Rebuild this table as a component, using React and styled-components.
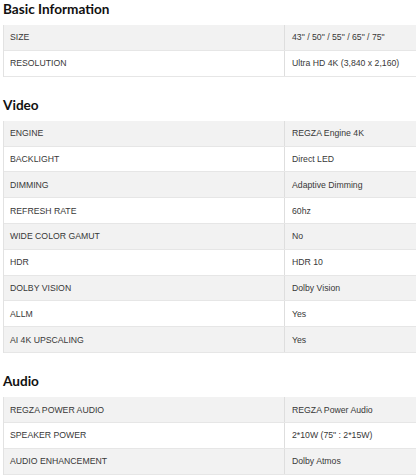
import React from "react";
import styled, { createGlobalStyle } from "styled-components";

const GlobalStyle = createGlobalStyle`
    html, body {
        margin: 0;
        padding: 0;
        background: #fff;
        overflow: hidden;
    }
`;

const Page = styled.div`
    width: 430px;
    padding: 0 0 0 3px;
    font-family: "Liberation Sans", Arial, sans-serif;
`;

const Section = styled.section`
    margin-bottom: ${(p) => (p.last ? "0" : "19.2px")};
`;

const Heading = styled.h2`
    margin: 0;
    height: 25px;
    padding-top: 1px;
    box-sizing: border-box;
    font-family: "Lato", "Liberation Sans", sans-serif;
    font-weight: 700;
    font-size: 13.6px;
    line-height: 16px;
    color: #111;
`;

const Table = styled.div`
    width: 427px;
    border-left: 1px solid #e2e2e2;
`;

const Row = styled.div`
    display: grid;
    grid-template-columns: 280px 1fr;
    height: 25.8px;
    box-sizing: border-box;
    border-bottom: 1px solid #e6e6e6;
    background: ${(p) => (p.shade ? "#f2f2f2" : "#ffffff")};
`;

const Cell = styled.div`
    display: flex;
    align-items: center;
    padding-left: ${(p) => (p.value ? "7px" : "6px")};
    font-size: 8.7px;
    color: #383838;
    white-space: nowrap;
    border-left: ${(p) => (p.value ? "1px solid #dedede" : "none")};
`;

const sections = [
    {
        title: "Basic Information",
        rows: [
            ["SIZE", "43\" / 50\" / 55\" / 65\" / 75\""],
            ["RESOLUTION", "Ultra HD 4K (3,840 x 2,160)"],
        ],
    },
    {
        title: "Video",
        rows: [
            ["ENGINE", "REGZA Engine 4K"],
            ["BACKLIGHT", "Direct LED"],
            ["DIMMING", "Adaptive Dimming"],
            ["REFRESH RATE", "60hz"],
            ["WIDE COLOR GAMUT", "No"],
            ["HDR", "HDR 10"],
            ["DOLBY VISION", "Dolby Vision"],
            ["ALLM", "Yes"],
            ["AI 4K UPSCALING", "Yes"],
        ],
    },
    {
        title: "Audio",
        rows: [
            ["REGZA POWER AUDIO", "REGZA Power Audio"],
            ["SPEAKER POWER", "2*10W (75\" : 2*15W)"],
            ["AUDIO ENHANCEMENT", "Dolby Atmos"],
        ],
    },
];

const App = () => (
    <Page>
        <GlobalStyle />
        {sections.map((s, si) => (
            <Section key={s.title} last={si === sections.length - 1}>
                <Heading>{s.title}</Heading>
                <Table>
                    {s.rows.map(([label, value], i) => (
                        <Row key={label} shade={i % 2 === 0}>
                            <Cell>{label}</Cell>
                            <Cell value>{value}</Cell>
                        </Row>
                    ))}
                </Table>
            </Section>
        ))}
    </Page>
);

export default App;
